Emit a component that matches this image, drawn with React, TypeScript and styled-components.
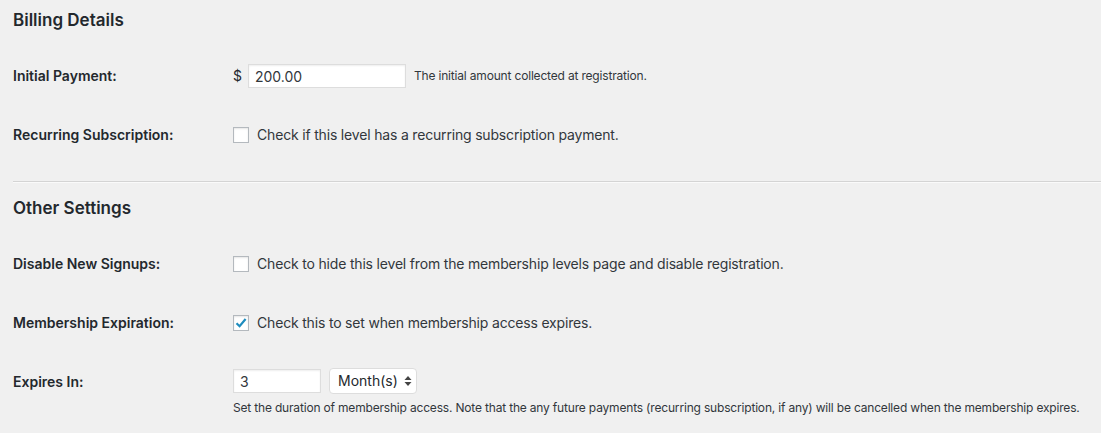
import styled, { createGlobalStyle } from 'styled-components';

const GlobalStyle = createGlobalStyle`
    html, body {
        margin: 0;
        padding: 0;
        background: #f0f0f0;
    }
    body {
        font-family: Inter, Roboto, "Liberation Sans", sans-serif;
        color: #23282d;
        font-size: 14px;
    }
`;

const Page = styled.div`
    padding: 0 0 0 13px;
`;

const SectionTitle = styled.h3<{ $top: number }>`
    margin: ${(p) => p.$top}px 0 0;
    font-size: 17px;
    line-height: 22px;
    font-weight: 600;
    color: #23282d;
`;

const Table = styled.div<{ $top: number }>`
    display: flex;
    flex-direction: column;
    margin-top: ${(p) => p.$top}px;
`;

const Row = styled.div`
    display: grid;
    grid-template-columns: 220px 1fr;
    align-items: start;
`;

const Label = styled.div`
    padding: 20px 0 21px;
    font-size: 14px;
    line-height: 18px;
    font-weight: 600;
`;

const Field = styled.div<{ $pad: number }>`
    padding-top: ${(p) => p.$pad}px;
    display: flex;
    flex-direction: column;
    gap: 6px;
`;

const Line = styled.div`
    display: flex;
    align-items: center;
    gap: 8px;
    line-height: 18px;
`;

const Currency = styled.span`
    font-size: 14px;
    margin-right: -2px;
`;

const TextInput = styled.input<{ $w: number }>`
    box-sizing: border-box;
    width: ${(p) => p.$w}px;
    height: 24px;
    margin: 0;
    padding: 0 6px;
    border: 1px solid #ddd;
    background: #fff;
    box-shadow: inset 0 1px 2px rgba(0, 0, 0, 0.07);
    font-family: inherit;
    font-size: 14px;
    color: #32373c;
    outline: none;
`;

const Hint = styled.span`
    font-size: 12px;
    letter-spacing: -0.18px;
    color: #32373c;
    line-height: 16px;
`;

const Box = styled.span`
    box-sizing: border-box;
    width: 16px;
    height: 16px;
    flex: none;
    border: 1px solid #b4b9be;
    background: #fff;
    box-shadow: inset 0 1px 2px rgba(0, 0, 0, 0.1);
    display: flex;
    align-items: center;
    justify-content: center;
`;

const CheckText = styled.span`
    font-size: 14px;
    letter-spacing: -0.18px;
    color: #32373c;
`;

const Divider = styled.hr`
    margin: 16px 0 0;
    border: 0;
    border-top: 1px solid #d4d4d4;
    border-bottom: 1px solid #fafafa;
`;

const SelectBox = styled.div`
    box-sizing: border-box;
    height: 26px;
    border: 1px solid #ddd;
    border-radius: 4px;
    background: #fff;
    display: flex;
    align-items: center;
    gap: 6px;
    padding: 0 4px 0 8px;
    font-size: 14px;
    color: #23282d;
`;

const Check = ({ checked }: { checked?: boolean }) => (
    <Box>
        {checked && (
            <svg width="14" height="14" viewBox="0 0 14 14">
                <path d="M2.5 7.2 L5.6 10.2 L11.6 3" fill="none" stroke="#1e8cbe" strokeWidth="2.2" />
            </svg>
        )}
    </Box>
);

const Arrows = () => (
    <svg width="8" height="12" viewBox="0 0 8 12">
        <path d="M4 1 L7.5 5 L0.5 5 Z" fill="#444" />
        <path d="M4 11 L7.5 7 L0.5 7 Z" fill="#444" />
    </svg>
);

const CheckRow = ({ label, text, checked }: { label: string; text: string; checked?: boolean }) => (
    <Row>
        <Label>{label}</Label>
        <Field $pad={20}>
            <Line>
                <Check checked={checked} />
                <CheckText>{text}</CheckText>
            </Line>
        </Field>
    </Row>
);

export default function App() {
    return (
        <>
            <GlobalStyle />
            <Page>
                <SectionTitle $top={9}>Billing Details</SectionTitle>
                <Table $top={16}>
                    <Row>
                        <Label>Initial Payment:</Label>
                        <Field $pad={17}>
                            <Line>
                                <Currency>$</Currency>
                                <TextInput $w={158} defaultValue="200.00" />
                                <Hint>The initial amount collected at registration.</Hint>
                            </Line>
                        </Field>
                    </Row>
                    <CheckRow label="Recurring Subscription:" text="Check if this level has a recurring subscription payment." />
                </Table>
                <Divider />
                <SectionTitle $top={14}>Other Settings</SectionTitle>
                <Table $top={16}>
                    <CheckRow
                        label="Disable New Signups:"
                        text="Check to hide this level from the membership levels page and disable registration."
                    />
                    <CheckRow label="Membership Expiration:" text="Check this to set when membership access expires." checked />
                    <Row>
                        <Label>Expires In:</Label>
                        <Field $pad={15}>
                            <Line>
                                <TextInput $w={88} defaultValue="3" />
                                <SelectBox>
                                    <span>Month(s)</span>
                                    <Arrows />
                                </SelectBox>
                            </Line>
                            <Hint>
                                Set the duration of membership access. Note that the any future payments (recurring
                                subscription, if any) will be cancelled when the membership expires.
                            </Hint>
                        </Field>
                    </Row>
                </Table>
            </Page>
        </>
    );
}
